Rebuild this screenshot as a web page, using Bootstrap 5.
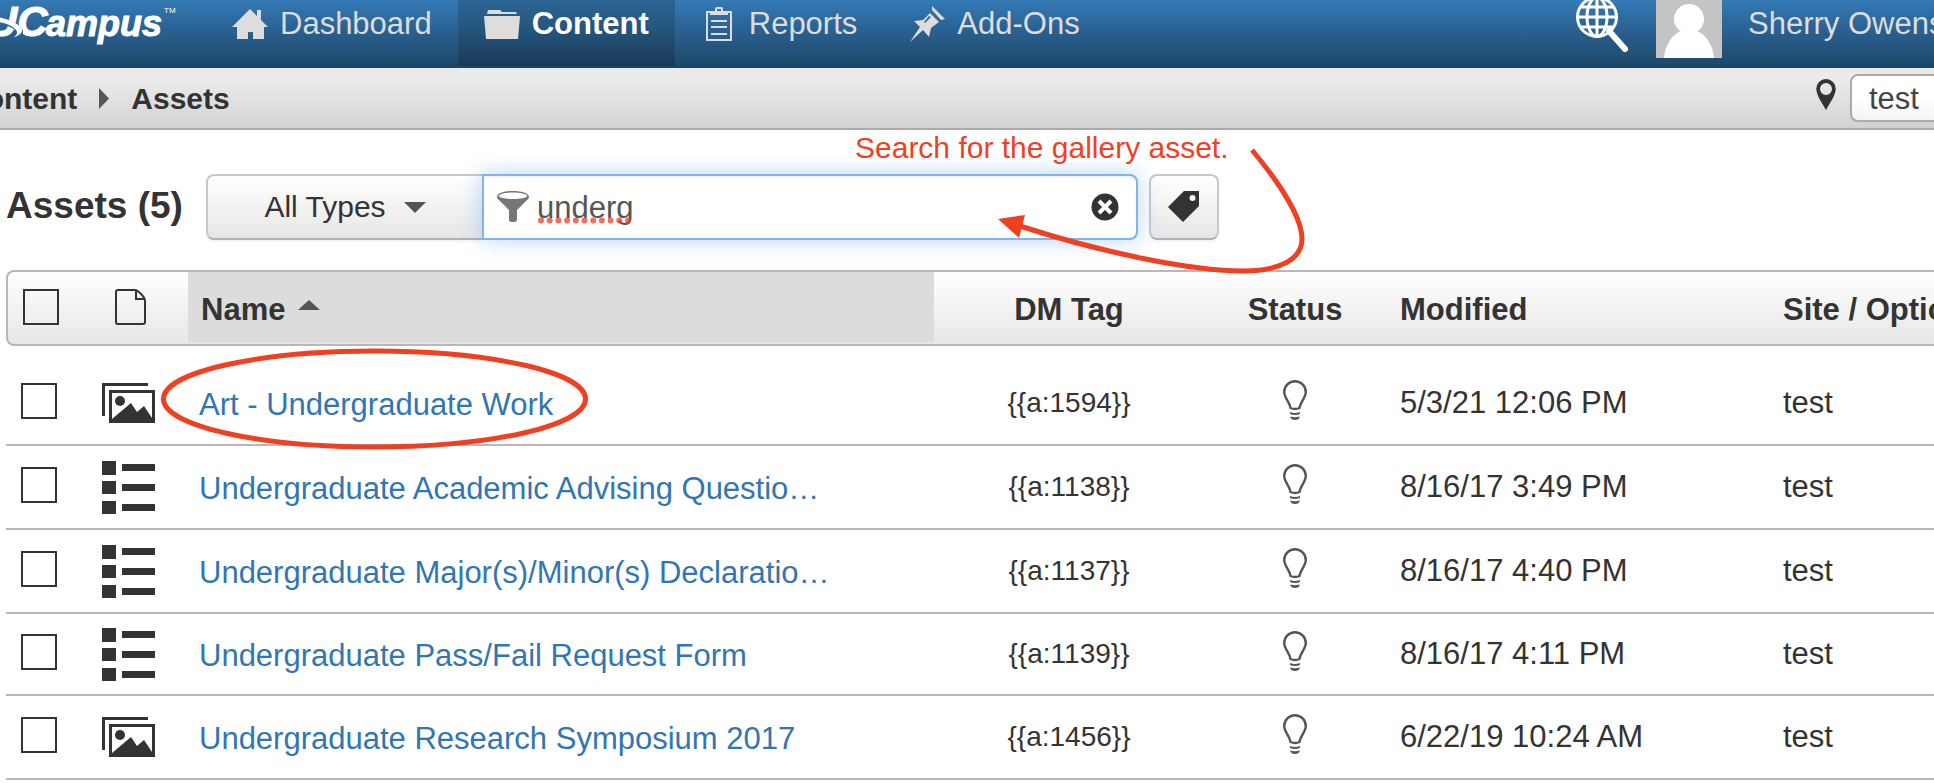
<!DOCTYPE html>
<html lang="en">
<head>
<meta charset="utf-8">
<meta name="viewport" content="width=device-width, initial-scale=1">
<title>Assets</title>
<link href="https://cdn.jsdelivr.net/npm/bootstrap@5.3.0/dist/css/bootstrap.min.css" rel="stylesheet">
<style>
  body { font-family: "Liberation Sans", Arial, sans-serif; font-size: 31px; line-height: 36px; color: #333; background: #fff; overflow-x: hidden; }
  a { text-decoration: none; }
  svg { display: block; flex: none; }

  /* top navigation */
  .topbar { height: 68px; background: linear-gradient(#347ab5, #2a6090 45%, #1d4869 97%, #1b4262); overflow: hidden; }
  .logo { width: 206px; }
  .logo text { font-family: "Liberation Sans", Arial, sans-serif; font-weight: bold; font-style: italic; fill: #fff; stroke: #fff; stroke-width: 1; }
  .logo .trade { font-weight: normal; font-style: normal; stroke: none; }
  .topbar .nav-link { height: 66px; padding: 6px 26px 24px; gap: 12px; color: #ddd; font-size: 31px; }
  .topbar .nav-link.active { color: #fff; font-weight: bold; background: linear-gradient(#2c6595, #24557c 45%, #1a3a57); }
  .user-area { height: 58px; color: #ddd; white-space: nowrap; width: 360px; }
  .user-area .user-name { padding-top: 6px; }
  .avatar { margin: 0 26px; }

  /* location bar */
  .crumbs { height: 62px; background: linear-gradient(#ebebeb, #ebebeb 20%, #d2d2d2); border-bottom: 2px solid #aaa; overflow: hidden; font-weight: bold; }
  .crumbs .breadcrumb { margin-left: -36px; gap: 22px; font-size: 30px; }
  .crumbs .breadcrumb a { padding-top: 2px; color: #333; }
  .site-box { width: 118px; gap: 14px; }
  .site-box select { flex: none; width: 140px; height: 48px; padding: 1px 17px 0; border: 2px solid #aaa; border-radius: 8px; font-size: 31px; line-height: 36px; color: #444; background: linear-gradient(#fff 45%, #f4f4f4); appearance: none; }

  /* heading and filter row */
  .page-body { padding: 44px 0 0 6px; }
  .page-body h1 { font-size: 37px; line-height: 44px; font-weight: bold; width: 200px; padding-bottom: 2px; }
  .soft-btn { height: 66px; border: 2px solid #c8c8c8; border-bottom-color: #b0b0b0; border-radius: 8px; background: linear-gradient(#fff, #e6e6e6); color: #333; font-size: 30px; line-height: 36px; padding: 0; box-shadow: 0 2px 3px rgba(0,0,0,.05); }
  .type-btn { width: 276px; gap: 18px; border-right: 0; border-radius: 8px 0 0 8px; }
  .tag-btn { width: 70px; margin-left: 11px; }
  .filter-box { width: 656px; height: 66px; border: 2px solid #80b4ea; border-radius: 0 8px 8px 0; background: #fff; padding: 0 17px 0 13px; box-shadow: 0 0 22px rgba(82,155,230,.42), inset 0 2px 2px rgba(0,0,0,.05); }
  .filter-box input { flex: 1; min-width: 0; border: 0; outline: 0; padding: 2px 0 0 8px; font-size: 31px; line-height: 36px; height: 44px; color: #555; background: transparent; }
  .filter-box button { border: 0; background: none; padding: 0; }
  .spell { left: 54px; top: 41px; }

  /* asset list */
  .list-area { margin-top: 30px; margin-right: -24px; }
  #assets { table-layout: fixed; width: 100%; margin: 0; border-collapse: separate; border-spacing: 0; }
  #assets th { height: 76px; padding: 3px 0 0; border: solid #b8b8b8; border-width: 2px 0; background: linear-gradient(#fff, #e6e6e6); vertical-align: middle; white-space: nowrap; color: #333; font-weight: bold; }
  #assets th:first-child { border-left-width: 2px; border-radius: 8px 0 0 8px; }
  #assets th.sorted { background: linear-gradient(#dcdcdc, #dcdcdc) 0 0 / 100% 70px no-repeat #e6e6e6; padding-left: 13px; }
  #assets td { height: 84px; padding: 0; border-bottom: 2px solid #b8b8b8; vertical-align: middle; white-space: nowrap; color: #333; }
  #assets tbody tr:first-child td { height: 100px; padding-top: 16px; }
  #assets tbody tr:nth-child(4) td { height: 82px; }
  #assets .date-col, #assets .site-col { padding-left: 14px; }
  #assets td.asset-name { padding-left: 11px; overflow: hidden; text-overflow: ellipsis; }
  #assets td a { color: #3276b1; display: inline-block; padding-top: 4px; }
  #assets td.tag-cell { font-size: 28px; }
  .tick { display: block; appearance: none; width: 36px; height: 36px; border: 2px solid #333; background: #fff; margin: 0 0 4px 15px; }
  th .tick { background: transparent; margin-bottom: 6px; }
  .file-icon { margin: 0 0 6px 29px; }
  .type-icon { margin-left: 16px; }
  .bulb { margin: 0 auto 6px; }
  .sort-arrow { margin: 0 0 4px 13px; }
  .w-tick { width: 80px; } .w-type { width: 102px; } .w-tag { width: 270px; } .w-status { width: 182px; } .w-date { width: 383px; } .w-site { width: 189px; }

  /* call-outs drawn over the page */
  .callout-note { left: 855px; top: 130px; color: #ee4123; font-size: 30px; white-space: nowrap; }
  .callout-art { left: 0; top: 0; pointer-events: none; }
</style>
</head>
<body>
<svg width="0" height="0" class="position-absolute" aria-hidden="true">
  <symbol id="i-gallery" viewBox="0 0 53 40">
    <path d="M0 0H46V3H3V33H0Z" fill="#333"/>
    <path fill="#333" fill-rule="evenodd" d="M7 7H53V40H7ZM10 10V36L29 20L35 29L42 23L50 35V10Z"/>
    <circle cx="18" cy="18" r="5" fill="#333"/>
  </symbol>
  <symbol id="i-list" viewBox="0 0 53 53">
    <path fill="#333" d="M0 0H14V14H0ZM0 20H14V33H0ZM0 40H14V53H0ZM20 3H53V10H20ZM20 23H53V30H20ZM20 43H53V50H20Z"/>
  </symbol>
  <symbol id="i-bulb" viewBox="0 0 24 40">
    <path d="M7.500 28C7 22 1.200 18 1.200 12A10.800 10.800 0 0 1 22.800 12C22.800 18 17 22 16.500 28Q12 30 7.500 28Z" fill="none" stroke="#555" stroke-width="2.400"/>
    <path d="M7 32Q12 34 17 32V34Q12 36 7 34ZM7 36.500Q12 38 17 36.500Q16 40 12 40Q8 40 7 36.500Z" fill="#555"/>
  </symbol>
</svg>

<nav class="topbar d-flex align-items-start">
  <a href="#" class="logo" aria-label="UCampus">
    <svg width="190" height="58" viewBox="0 0 190 58">
      <text x="-13" y="36" font-size="42">U<tspan>C</tspan></text>
      <text x="46" y="36" font-size="36">ampus</text>
      <path d="M-2 20C11 23 20 28 20 32Q20 36 14 38" fill="none" stroke="#286396" stroke-width="6"/>
      <path d="M-2 17C10 19 24 26 22 31Q21 35 14 37Q19 33 16 30Q11 24 -2 22Z" fill="#fff"/>
      <text class="trade" x="164" y="13" font-size="8">TM</text>
    </svg>
  </a>
  <div class="nav flex-nowrap">
    <a class="nav-link d-flex align-items-center" href="#">
      <svg width="36" height="32" viewBox="0 0 36 32"><path fill="#ddd" d="M18 1L25 8V2H29V12L36 19H32V31H21V24H16V31H5V19H0Z"/></svg>
      <span>Dashboard</span></a>
    <a class="nav-link active d-flex align-items-center" href="#" aria-current="page">
      <svg width="36" height="32" viewBox="0 0 36 32"><path fill="#ddd" d="M4 2H16L18 4H32L33 6H3ZM0 8H36L34 31H2Z"/></svg>
      <span>Content</span></a>
    <a class="nav-link d-flex align-items-center" href="#">
      <svg width="36" height="36" viewBox="0 0 36 36"><path fill="none" stroke="#ddd" stroke-width="2" d="M9 6H6V34H30V6H27"/><path fill="#ddd" fill-rule="evenodd" d="M9 5H14V3Q14 1 16 1H20Q22 1 22 3V5H27V9H9ZM16 3V5H20V3ZM10 14H26V16H10ZM10 20H26V22H10ZM10 27H26V29H10Z"/></svg>
      <span>Reports</span></a>
    <a class="nav-link d-flex align-items-center" href="#">
      <svg width="36" height="36" viewBox="0 0 36 36"><path fill="#ddd" fill-rule="evenodd" d="M23 0L36 13L32 14L23 4ZM21 7L30 16L22 22L20 31L14 24L1 36L11 21L5 15L14 14ZM20 10L15 16L16 17L22 11Z"/></svg>
      <span>Add-Ons</span></a>
  </div>
  <div class="user-area ms-auto d-flex align-items-start">
    <a href="#" aria-label="Search">
      <svg width="56" height="54" viewBox="0 0 56 54"><g fill="none" stroke="#fff" stroke-width="3"><circle cx="23" cy="17" r="19.500"/><ellipse cx="23" cy="17" rx="10" ry="19.500"/><path d="M23 -2V37M3 17H43M6 7H40M6 27H40"/></g><path d="M35 31L51 49" stroke="#fff" stroke-width="6" stroke-linecap="round"/></svg>
    </a>
    <svg class="avatar" width="66" height="58" viewBox="0 0 66 58"><path fill="#c4c4c4" d="M0 0H66V58H0Z"/><circle cx="33" cy="19" r="15" fill="#fff"/><path fill="#fff" d="M8 58C9 45 17 33 26 31H40C49 33 57 45 58 58Z"/></svg>
    <a href="#" class="user-name text-reset">Sherry Owens</a>
  </div>
</nav>

<div class="crumbs d-flex align-items-center justify-content-between">
  <div class="breadcrumb flex-nowrap align-items-center mb-0">
    <a href="#">Content</a>
    <svg width="10" height="21" viewBox="0 0 10 21"><path fill="#555" d="M0 0L10 10.500L0 21Z"/></svg>
    <a href="#">Assets</a>
  </div>
  <div class="site-box d-flex align-items-center">
    <label for="site"><svg width="20" height="38" viewBox="0 0 20 38" aria-label="Site"><path fill="#333" fill-rule="evenodd" d="M10 0A9.700 9.700 0 0 1 19.700 10C19.700 16 14 24 10 31C6 24 .3 16 .3 10A9.700 9.700 0 0 1 10 0ZM10 4A6 6 0 1 0 10 16A6 6 0 1 0 10 4Z"/></svg></label>
    <select id="site" class="fw-normal"><option>test</option></select>
  </div>
</div>

<main class="page-body">
  <div class="d-flex align-items-center">
    <h1 class="mb-0 text-nowrap">Assets (5)</h1>
    <button type="button" class="soft-btn type-btn d-flex align-items-center justify-content-center">All Types
      <svg width="22" height="11" viewBox="0 0 22 11"><path fill="#555" d="M0 0H22L11 11Z"/></svg></button>
    <div class="filter-box d-flex align-items-center position-relative">
      <svg width="32" height="32" viewBox="0 0 32 32"><path fill="#777" fill-rule="evenodd" d="M16 0C24 0 32 2 32 6Q32 8 29 10L20 19V29Q20 31 16 31Q12 31 12 29V19L3 10Q0 8 0 6C0 2 8 0 16 0ZM16 1.500C9 1.500 2 3 2 5C2 7 9 8 16 8C23 8 30 7 30 5C30 3 23 1.500 16 1.500Z"/></svg>
      <input type="text" value="underg" aria-label="Filter by name" spellcheck="false">
      <svg class="spell position-absolute" width="98" height="7" viewBox="0 0 98 7"><path d="M3 3.500H97" stroke="#e8402c" stroke-opacity=".75" stroke-width="6" stroke-linecap="round" stroke-dasharray="0 8.700"/></svg>
      <button type="button" aria-label="Clear"><svg width="28" height="28" viewBox="0 0 28 28"><circle cx="14" cy="14" r="13.500" fill="#333"/><path d="M8 8L20 20M20 8L8 20" stroke="#fff" stroke-width="4"/></svg></button>
    </div>
    <button type="button" class="soft-btn tag-btn d-flex align-items-center justify-content-center" aria-label="Tags">
      <svg width="32" height="32" viewBox="0 0 32 32"><path fill="#333" fill-rule="evenodd" d="M16 0H31V15L15 31L0 16ZM24.500 4A3 3 0 1 0 24.500 10A3 3 0 1 0 24.500 4Z"/></svg></button>
  </div>

  <div class="list-area">
    <table id="assets">
      <colgroup><col class="w-tick"><col class="w-type"><col><col class="w-tag"><col class="w-status"><col class="w-date"><col class="w-site"></colgroup>
      <thead>
        <tr>
          <th><input type="checkbox" class="tick" aria-label="Select all"></th>
          <th aria-label="Type"><svg class="file-icon" width="31" height="36" viewBox="0 0 31 36"><path fill="none" stroke="#333" stroke-width="2" d="M3 1H20Q22 1 26 5Q30 9 30 12V33Q30 35 28 35H3Q1 35 1 33V3Q1 1 3 1ZM21 1V10H30"/></svg></th>
          <th class="sorted"><span class="d-flex align-items-center">Name <svg class="sort-arrow" width="22" height="20" viewBox="0 0 22 20"><path fill="#555" d="M11 2L22 12H0Z"/></svg></span></th>
          <th class="text-center">DM Tag</th>
          <th class="text-center">Status</th>
          <th class="date-col">Modified</th>
          <th class="site-col">Site / Options</th>
        </tr>
      </thead>
      <tbody></tbody>
    </table>
  </div>
</main>

<div class="callout-note position-absolute">Search for the gallery asset.</div>
<svg class="callout-art position-absolute" width="1320" height="460" viewBox="0 0 1320 460" aria-hidden="true">
  <g fill="none" stroke="#ee4123" stroke-width="5">
    <ellipse cx="374.500" cy="399" rx="211" ry="48"/>
    <path d="M1252 150C1282 186 1302 219 1302 239C1302 259 1280 271 1244 271C1190 271 1100 252 1020 226"/>
  </g>
  <path fill="#ee4123" d="M998 219L1025 215L1019 238Z"/>
</svg>

<script src="https://cdn.jsdelivr.net/npm/bootstrap@5.3.0/dist/js/bootstrap.bundle.min.js"></script>
<script>
  const assets = [
    ["gallery", "Art - Undergraduate Work", 1594, "5/3/21 12:06 PM"],
    ["list", "Undergraduate Academic Advising Questio…", 1138, "8/16/17 3:49 PM"],
    ["list", "Undergraduate Major(s)/Minor(s) Declaratio…", 1137, "8/16/17 4:40 PM"],
    ["list", "Undergraduate Pass/Fail Request Form", 1139, "8/16/17 4:11 PM"],
    ["gallery", "Undergraduate Research Symposium 2017", 1456, "6/22/19 10:24 AM"]
  ];
  document.querySelector("#assets tbody").innerHTML = assets.map(([type, name, tag, date]) => `
    <tr>
      <td><input type="checkbox" class="tick" aria-label="Select ${name}"></td>
      <td><svg class="type-icon" width="53" height="${type === "list" ? 53 : 40}"><use href="#i-${type}"/></svg></td>
      <td class="asset-name"><a href="#">${name}</a></td>
      <td class="tag-cell text-center">{{a:${tag}}}</td>
      <td><svg class="bulb" width="24" height="40"><use href="#i-bulb"/></svg></td>
      <td class="date-col">${date}</td>
      <td class="site-col">test</td>
    </tr>`).join("");
</script>
</body>
</html>
